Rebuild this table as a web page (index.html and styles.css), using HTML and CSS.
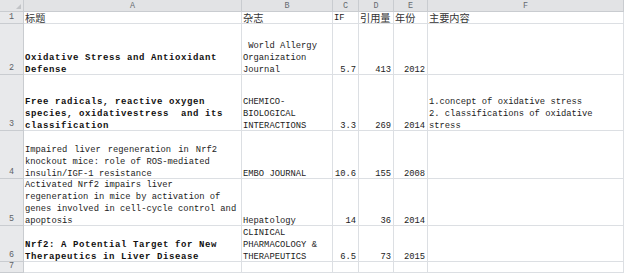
FILE: index.html
```html
<!DOCTYPE html>
<html lang="zh-CN">
<head>
<meta charset="utf-8">
<title>Sheet</title>
<link rel="stylesheet" href="styles.css">
</head>
<body>
<div class="sheet">
  <div class="corner"><span class="tri"></span></div>
  <div class="hd">A</div>
  <div class="hd">B</div>
  <div class="hd">C</div>
  <div class="hd">D</div>
  <div class="hd">E</div>
  <div class="hd">F</div>

  <div class="rn">1</div>
  <div class="c top"><div class="cjk">标题</div></div>
  <div class="c top"><div class="cjk">杂志</div></div>
  <div class="c top"><div>IF</div></div>
  <div class="c top"><div class="cjk">引用量</div></div>
  <div class="c top"><div class="cjk">年份</div></div>
  <div class="c top"><div class="cjk">主要内容</div></div>

  <div class="rn">2</div>
  <div class="c b"><div>Oxidative Stress and Antioxidant<br>Defense</div></div>
  <div class="c"><div>&nbsp;World Allergy<br>Organization<br>Journal</div></div>
  <div class="c num"><div>5.7</div></div>
  <div class="c num"><div>413</div></div>
  <div class="c num"><div>2012</div></div>
  <div class="c"></div>

  <div class="rn">3</div>
  <div class="c b"><div>Free radicals, reactive oxygen<br>species, oxidativestress&nbsp; and its<br>classification</div></div>
  <div class="c"><div>CHEMICO-<br>BIOLOGICAL<br>INTERACTIONS</div></div>
  <div class="c num"><div>3.3</div></div>
  <div class="c num"><div>269</div></div>
  <div class="c num"><div>2014</div></div>
  <div class="c"><div>1.concept of oxidative stress<br>2. classifications of oxidative<br>stress</div></div>

  <div class="rn">4</div>
  <div class="c"><div><span class="spread">Impaired liver regeneration in Nrf2</span><br>knockout mice: role of ROS-mediated<br>insulin/IGF-1 resistance</div></div>
  <div class="c"><div>EMBO JOURNAL</div></div>
  <div class="c num"><div>10.6</div></div>
  <div class="c num"><div>155</div></div>
  <div class="c num"><div>2008</div></div>
  <div class="c"></div>

  <div class="rn">5</div>
  <div class="c"><div>Activated Nrf2 impairs liver<br>regeneration in mice by activation of<br>genes involved in cell-cycle control and<br>apoptosis</div></div>
  <div class="c"><div>Hepatology</div></div>
  <div class="c num"><div>14</div></div>
  <div class="c num"><div>36</div></div>
  <div class="c num"><div>2014</div></div>
  <div class="c"></div>

  <div class="rn">6</div>
  <div class="c b"><div>Nrf2: A Potential Target for New<br>Therapeutics in Liver Disease</div></div>
  <div class="c"><div>CLINICAL<br>PHARMACOLOGY &amp;<br>THERAPEUTICS</div></div>
  <div class="c num"><div>6.5</div></div>
  <div class="c num"><div>73</div></div>
  <div class="c num"><div>2015</div></div>
  <div class="c"></div>

  <div class="rn">7</div>
  <div class="c"></div>
  <div class="c"></div>
  <div class="c"></div>
  <div class="c"></div>
  <div class="c"></div>
  <div class="c"></div>
</div>
</body>
</html>
```

FILE: styles.css
```css
html, body {
  margin: 0;
  padding: 0;
  background: #ffffff;
}

.sheet {
  width: 624px;
  height: 273px;
  display: grid;
  grid-template-columns: 24px 218px 91px 26px 35px 34px 1fr;
  grid-template-rows: 12px 12px 51px 56px 48px 47px 36px 11px;
  font-family: "Liberation Mono", "DejaVu Sans Mono", monospace;
  font-size: 8.8px;
  line-height: 12px;
  color: #1c1c1c;
  overflow: hidden;
}

.sheet > div {
  box-sizing: border-box;
  border-right: 1px solid #dcdfe3;
  border-bottom: 1px solid #dcdfe3;
  min-width: 0;
}

.corner {
  background: #e4e5e7;
  border-color: #c9ccd0 !important;
  position: relative;
}

.tri {
  position: absolute;
  right: 2px;
  bottom: 2px;
  width: 0;
  height: 0;
  border-left: 5px solid transparent;
  border-bottom: 5px solid #c2c4c7;
}

.hd {
  background: #e2e3e5;
  border-color: #c9ccd0 !important;
  color: #666a70;
  font-size: 8.4px;
  line-height: 12px;
  text-align: center;
}

.rn {
  background: #e8e9eb;
  border-color: #c9ccd0 !important;
  color: #5d6166;
  font-size: 8.4px;
  text-align: center;
  display: flex;
  flex-direction: column;
  justify-content: flex-end;
  padding-bottom: 0;
}

.c {
  display: flex;
  flex-direction: column;
  justify-content: flex-end;
  padding-left: 1px;
  white-space: nowrap;
  overflow: visible;
}

.c > div {
  position: relative;
  top: 2px;
}

.c.top > div {
  top: 1px;
}

.num {
  text-align: right;
  padding-right: 2px;
  padding-left: 0;
}

.b {
  font-weight: bold;
  font-size: 9px;
  letter-spacing: 0.6px;
  color: #111111;
}

.cjk {
  font-family: "Noto Sans CJK SC", "Liberation Sans", sans-serif;
  font-size: 10.2px;
  color: #333333;
}

.spread {
  word-spacing: 1.8px;
}
```
